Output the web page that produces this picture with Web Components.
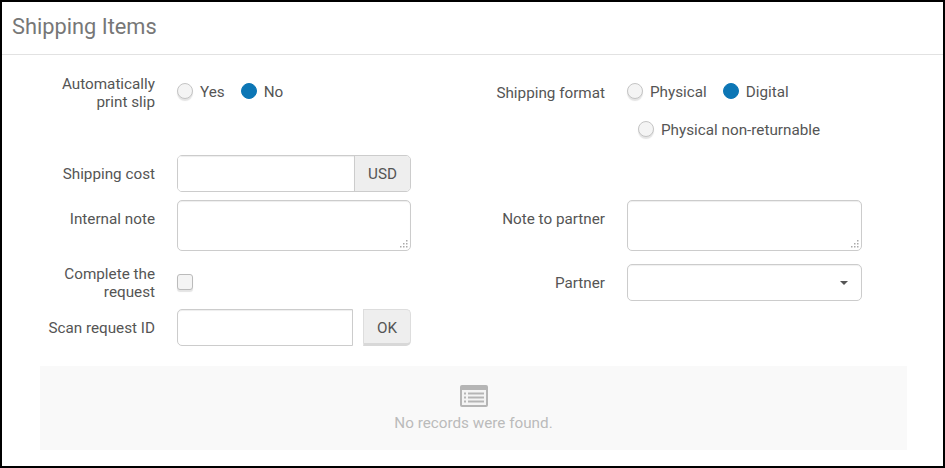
<!DOCTYPE html>
<html>
<head>
<meta charset="utf-8">
<title>Shipping Items</title>
<style>
    html, body { margin: 0; padding: 0; background: white; }
    body { font-family: Roboto, "Liberation Sans", sans-serif; font-size: 15.25px; color: #555; }
</style>
</head>
<body>
<shipping-panel title-text="Shipping Items">
    <form-field label="Automatically print slip" style="--top: 1px">
        <div style="display:flex; column-gap:16px">
            <radio-option>Yes</radio-option>
            <radio-option checked>No</radio-option>
        </div>
    </form-field>
    <form-field label="Shipping format" style="--top: 10px">
        <div style="display:flex; flex-wrap:wrap; column-gap:16px">
            <radio-option>Physical</radio-option>
            <radio-option checked>Digital</radio-option>
            <radio-option style="flex-basis:100%; padding-left:11px">Physical non-returnable</radio-option>
        </div>
    </form-field>
    <form-field label="Shipping cost" style="--top: 10px"><addon-input addon="USD"></addon-input></form-field>
    <span></span>
    <form-field label="Internal note" style="--top: 10px"><note-area></note-area></form-field>
    <form-field label="Note to partner" style="--top: 10px"><note-area></note-area></form-field>
    <form-field label="Complete the request" style="--top: 1px"><check-box></check-box></form-field>
    <form-field label="Partner" style="--top: 10px"><select-box></select-box></form-field>
    <form-field label="Scan request ID" style="--top: 10px"><scan-input></scan-input></form-field>
    <span></span>
</shipping-panel>
<script>
class ShippingPanel extends HTMLElement {
    constructor() {
        super();
        const shadow = this.attachShadow({ mode: "open" });
        shadow.innerHTML = `
            <style>
                :host { display: block; box-sizing: border-box; width: 945px; height: 468px; border: 2px solid black; }
                h1 { margin: 0; height: 52px; line-height: 49px; padding-left: 10px; font-size: 21.8px; font-weight: 400; color: #777; border-bottom: 1px solid #e2e2e2; }
                .form {
                    display: grid;
                    grid-template-columns: 371px 372px;
                    grid-template-rows: 81px 45px 64px 45px 37px;
                    column-gap: 79px;
                    padding: 19px 0 0 38px;
                }
            </style>
            <h1></h1>
            <div class="form"><slot></slot></div>
            <empty-state>No records were found.</empty-state>
        `;
        shadow.querySelector("h1").textContent = this.getAttribute("title-text");
    }
}

class FormField extends HTMLElement {
    constructor() {
        super();
        const shadow = this.attachShadow({ mode: "open" });
        shadow.innerHTML = `
            <style>
                :host { display: grid; grid-template-columns: 115px minmax(0, 1fr); column-gap: 22px; align-items: start; }
                label { display: block; text-align: right; line-height: 18px; padding-top: var(--top, 0); }
            </style>
            <label></label>
            <div><slot></slot></div>
        `;
        shadow.querySelector("label").textContent = this.getAttribute("label");
    }
}

class RadioOption extends HTMLElement {
    constructor() {
        super();
        const shadow = this.attachShadow({ mode: "open" });
        shadow.innerHTML = `
            <style>
                :host { display: block; height: 38px; padding-top: 8px; box-sizing: border-box; }
                .wrap { display: flex; align-items: flex-start; gap: 7px; line-height: 18px; }
                .text { padding-top: 1px; }
                .dot { box-sizing: border-box; width: 16px; height: 16px; margin-top: 1px; border-radius: 50%; background: #f4f4f4; border: 1px solid #c4c4c4; box-shadow: 0 2px 1px #e4e4e4; }
                :host([checked]) .dot { background: #0c76b5; border-color: #0c76b5; box-shadow: none; }
            </style>
            <div class="wrap"><span class="dot"></span><span class="text"><slot></slot></span></div>
        `;
    }
}

class CheckBox extends HTMLElement {
    constructor() {
        super();
        this.attachShadow({ mode: "open" }).innerHTML = `
            <style>
                :host { display: block; padding-top: 10px; }
                div { box-sizing: border-box; width: 16px; height: 16px; border-radius: 3px; background: #f4f4f4; border: 1px solid #bbb; box-shadow: 0 2px 1px #e4e4e4; }
            </style>
            <div></div>
        `;
    }
}

class AddonInput extends HTMLElement {
    constructor() {
        super();
        const shadow = this.attachShadow({ mode: "open" });
        shadow.innerHTML = `
            <style>
                :host { display: flex; height: 37px; box-sizing: border-box; border: 1px solid #ccc; border-radius: 5px; overflow: hidden; }
                input { flex: 1; min-width: 0; border: 0; outline: 0; padding: 0; box-shadow: inset 0 1px 1px #eee; }
                span { width: 55px; padding-top: 1px; border-left: 1px solid #ccc; background: #eee; text-align: center; line-height: 35px; color: #555; }
            </style>
            <input type="text"><span></span>
        `;
        shadow.querySelector("span").textContent = this.getAttribute("addon");
    }
}

class NoteArea extends HTMLElement {
    constructor() {
        super();
        this.attachShadow({ mode: "open" }).innerHTML = `
            <style>
                :host { display: block; position: relative; }
                textarea { display: block; box-sizing: border-box; width: 100%; height: 51px; margin: 0; border: 1px solid #ccc; border-radius: 5px; outline: 0; box-shadow: inset 0 1px 1px #eee; resize: none; }
                svg { position: absolute; right: 3px; bottom: 3px; }
            </style>
            <textarea></textarea>
            <svg width="8" height="8" viewBox="0 0 8 8" fill="#aaa">
                <rect x="6" y="0" width="1.500" height="1.500"/>
                <rect x="3" y="3" width="1.500" height="1.500"/><rect x="6" y="3" width="1.500" height="1.500"/>
                <rect x="0" y="6" width="1.500" height="1.500"/><rect x="3" y="6" width="1.500" height="1.500"/><rect x="6" y="6" width="1.500" height="1.500"/>
            </svg>
        `;
    }
}

class SelectBox extends HTMLElement {
    constructor() {
        super();
        this.attachShadow({ mode: "open" }).innerHTML = `
            <style>
                :host { display: flex; align-items: center; justify-content: flex-end; box-sizing: border-box; height: 37px; padding-right: 13px; border: 1px solid #ccc; border-radius: 5px; box-shadow: inset 0 1px 1px #f0f0f0; }
                i { width: 0; height: 0; border: 4px solid transparent; border-top-color: #555; border-bottom: 0; }
            </style>
            <i></i>
        `;
    }
}

class ScanInput extends HTMLElement {
    constructor() {
        super();
        this.attachShadow({ mode: "open" }).innerHTML = `
            <style>
                :host { display: flex; justify-content: space-between; height: 37px; }
                input { box-sizing: border-box; width: 176px; height: 37px; margin: 0; padding: 0; border: 1px solid #ccc; border-radius: 5px 0 0 5px; outline: 0; box-shadow: inset 0 1px 1px #eee; }
                button { box-sizing: border-box; width: 48px; height: 37px; padding: 2px 0 0; font: inherit; color: #555; background: #eee; border: 1px solid #ddd; border-bottom: 3px solid #d8d8d8; border-radius: 0 5px 5px 0; }
            </style>
            <input type="text"><button>OK</button>
        `;
    }
}

class EmptyState extends HTMLElement {
    constructor() {
        super();
        this.attachShadow({ mode: "open" }).innerHTML = `
            <style>
                :host { display: flex; flex-direction: column; align-items: center; box-sizing: border-box; width: 867px; height: 84px; margin: 20px 0 0 38px; padding-top: 19px; background: #f9f9f9; color: #bbb; line-height: 18px; }
                svg { display: block; margin-bottom: 7px; }
            </style>
            <svg width="28" height="22" viewBox="0 0 28 22">
                <rect width="28" height="22" rx="2" fill="#b5b5b5"/>
                <rect x="2" y="5" width="24" height="15" fill="#f4f4f4"/>
                <path d="M4 7.500h2v2h-2zM8 7.500h16v2h-16zM4 11.500h2v2h-2zM8 11.500h16v2h-16zM4 15.500h2v2h-2zM8 15.500h16v2h-16z" fill="#b5b5b5"/>
            </svg>
            <span><slot></slot></span>
        `;
    }
}

customElements.define("shipping-panel", ShippingPanel);
customElements.define("form-field", FormField);
customElements.define("radio-option", RadioOption);
customElements.define("check-box", CheckBox);
customElements.define("addon-input", AddonInput);
customElements.define("note-area", NoteArea);
customElements.define("select-box", SelectBox);
customElements.define("scan-input", ScanInput);
customElements.define("empty-state", EmptyState);
</script>
</body>
</html>
